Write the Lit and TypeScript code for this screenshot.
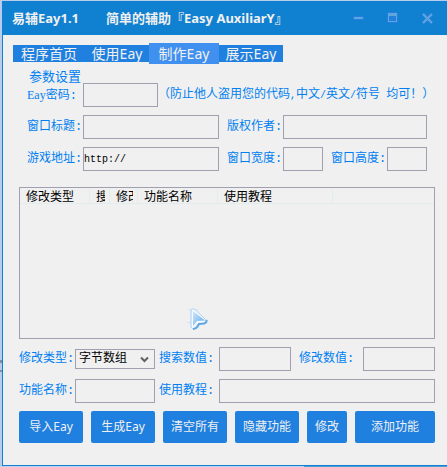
import { LitElement, html, css } from "lit";
import { customElement, state } from "lit/decorators.js";
import { classMap } from "lit/directives/class-map.js";

const TABS = ["程序首页", "使用Eay", "制作Eay", "展示Eay"];
const COLUMNS = [
  { name: "修改类型", cls: "c-type" },
  { name: "搜索数值", cls: "c-search" },
  { name: "修改数值", cls: "c-value" },
  { name: "功能名称", cls: "c-name" },
  { name: "使用教程", cls: "c-guide" },
  { name: "", cls: "c-rest" },
];

@customElement("app-root")
export class AppRoot extends LitElement {
  @state() private active = 2;

  static styles = css`
    :host {
      display: block;
      min-height: 100vh;
      box-sizing: border-box;
      padding: 1px 0 1px 2px;
      background:
        linear-gradient(90deg, #c0d0f0 68%, #50a0d8 68%) bottom / 100% 1px no-repeat,
        linear-gradient(#8090a0, #8090a0) 0 360px / 2px 3px no-repeat,
        linear-gradient(#8090a0, #8090a0) 0 370px / 2px 2px no-repeat,
        #b8ccec;
      font: 12px/16px "Liberation Mono", "Noto Sans CJK SC", sans-serif;
      color: #0080f0;
      display: flex;
    }
    * { box-sizing: border-box; }
    .window {
      flex: 1;
      min-width: 0;
      background: #f0f0f0;
      border-left: 1px solid #1080d0;
      border-bottom: 1px solid #1080d0;
      position: relative;
    }
    header {
      height: 34px;
      background: #1080d0;
      color: #f0f0f0;
      display: flex;
      align-items: center;
      padding: 0 12px 0 9px;
    }
    h1 {
      margin: 0;
      flex: 1;
      display: flex;
      gap: 27px;
      font: bold 13px/20px "Noto Sans", "Noto Sans CJK SC", sans-serif;
      white-space: nowrap;
    }
    .controls { display: flex; gap: 19px; }
    .controls button {
      width: 16px;
      height: 16px;
      padding: 0;
      border: 0;
      background: none;
    }
    svg { display: block; }
    nav {
      display: flex;
      width: max-content;
      margin: 8px 0 0 10px;
      align-items: center;
      background: linear-gradient(#2080e0, #2080e0) center / 100% 17px no-repeat;
    }
    nav button {
      border: 0;
      padding: 0;
      background: none;
      color: #f0f0f0;
      height: 21px;
      width: 64px;
      font: 14px/20px "Noto Sans", "Noto Sans CJK SC", sans-serif;
      white-space: nowrap;
    }
    nav button.home { width: 72px; }
    nav button.on { background: #4090f0; width: 70px; }
    fieldset {
      border: 0;
      margin: 5px 20px 0 24px;
      padding: 0;
      min-width: 0;
      display: grid;
      grid-template-columns: minmax(0, 1fr);
      gap: 8px;
    }
    legend {
      padding: 0 0 0 2px;
      height: 14px;
      font: 13px/14px "Noto Sans CJK SC", sans-serif;
    }
    .pair {
      display: grid;
      grid-template-columns: minmax(0, 192fr) minmax(0, 200fr);
      gap: 8px;
    }
    .halves {
      display: grid;
      grid-template-columns: repeat(2, minmax(0, 1fr));
      gap: 8px;
    }
    .secret { display: flex; align-items: center; white-space: nowrap; }
    .secret .field { flex: 0 0 131px; }
    .field {
      display: grid;
      grid-template-columns: 56px minmax(0, 1fr);
      align-items: center;
      white-space: nowrap;
    }
    .latin { font-size: 10px; }
    .brand { font-family: "Liberation Serif", serif; }
    input, select {
      width: 100%;
      height: 24px;
      margin: 0;
      border: 1px solid #a0a0b0;
      border-radius: 0;
      background: transparent;
      padding: 0;
      outline: none;
      color: #000;
      font: 10px/16px "Liberation Mono", "Noto Sans CJK SC", sans-serif;
    }
    select {
      appearance: none;
      height: 20px;
      padding: 0 3px;
      font-size: 12px;
    }
    .drop { position: relative; }
    .drop svg { position: absolute; right: 6px; top: 7px; pointer-events: none; }
    .list {
      margin: 16px 12px 0 16px;
      height: 152px;
      border: 1px solid #a0a0b0;
    }
    table {
      width: 100%;
      table-layout: fixed;
      border-collapse: separate;
      border-spacing: 0;
      color: #000;
    }
    th {
      height: 16px;
      padding: 0 4px 0 6px;
      border-right: 1px solid #e2ecec;
      border-bottom: 1px solid #e2ecec;
      font: 12px/15px "Noto Sans CJK SC", sans-serif;
      text-align: left;
    }
    th:last-child { border-right: 0; }
    th span { display: block; overflow: hidden; white-space: nowrap; }
    .c-type { width: 70px; }
    .c-search { width: 20px; }
    .c-value { width: 28px; }
    .c-name { width: 80px; }
    .c-guide { width: 115px; }
    .editor {
      margin: 8px 12px 0 16px;
      display: grid;
      grid-template-columns: repeat(3, minmax(0, 1fr));
      gap: 8px 4px;
    }
    .editor .mid { grid-template-columns: 60px minmax(0, 1fr); padding-right: 4px; }
    .editor .end { grid-template-columns: 64px minmax(0, 1fr); }
    .editor .wide { grid-template-columns: 60px minmax(0, 1fr); grid-column: span 2; }
    .actions {
      margin: 8px 12px 0 16px;
      display: grid;
      grid-template-columns: 64fr 64fr 64fr 64fr 40fr 80fr;
      gap: 8px;
    }
    .actions button {
      height: 32px;
      padding: 0;
      border: 0;
      border-radius: 2px;
      background: #2080e0;
      color: #f0f0f0;
      font: 12px/20px "Noto Sans", "Noto Sans CJK SC", sans-serif;
      white-space: nowrap;
    }
    .pointer { position: absolute; left: 184px; top: 306px; pointer-events: none; }
  `;

  render() {
    return html`
      <div class="window" lang="zh-CN">
        <header>
          <h1><span>易辅Eay1.1</span><span>简单的辅助『Easy AuxiliarY』</span></h1>
          <div class="controls">
            <button aria-label="最小化"><svg width="16" height="16"><rect x="4.500" y="6.500" width="10" height="3" fill="#60a4e0" stroke="#2080dc"/></svg></button>
            <button aria-label="最大化"><svg width="16" height="16"><rect x="3" y="2" width="11" height="11" fill="#2080dc"/><path d="M4 3h9v9H4zM5 6v5h7V6z" fill="#60a4e0" fill-rule="evenodd"/></svg></button>
            <button aria-label="关闭"><svg width="16" height="16"><path d="M4 4l9 9M13 4l-9 9" stroke="#2080dc" stroke-width="4"/><path d="M4 4l9 9M13 4l-9 9" stroke="#60a4e0" stroke-width="2"/></svg></button>
          </div>
        </header>
        <nav>
          ${TABS.map((t, i) => html`<button
            class=${classMap({ on: i === this.active, home: i === 0 })}
            @click=${() => (this.active = i)}>${t}</button>`)}
        </nav>
        <fieldset>
          <legend>参数设置</legend>
          <div class="secret">
            <div class="field"><label for="pw"><span class="brand">Eay</span>密码:</label><input id="pw" type="password"></div>
            <span>（防止他人盗用您的代码<span class="latin">,</span>中文<span class="latin">/</span>英文<span class="latin">/</span>符号<span class="latin"> </span>均可！）</span>
          </div>
          <div class="pair">
            <div class="field"><label for="title">窗口标题:</label><input id="title"></div>
            <div class="field"><label for="author">版权作者:</label><input id="author"></div>
          </div>
          <div class="pair">
            <div class="field"><label for="url">游戏地址:</label><input id="url" value="http://"></div>
            <div class="halves">
              <div class="field"><label for="w">窗口宽度:</label><input id="w"></div>
              <div class="field"><label for="h">窗口高度:</label><input id="h"></div>
            </div>
          </div>
        </fieldset>
        <div class="list">
          <table>
            <thead><tr>${COLUMNS.map((c) => html`<th class=${c.cls}><span>${c.name}</span></th>`)}</tr></thead>
          </table>
        </div>
        <div class="editor">
          <div class="field">
            <label for="kind">修改类型:</label>
            <div class="drop">
              <select id="kind"><option>字节数组</option></select>
              <svg width="9" height="7"><path d="M1 1.500l3.500 3.500 3.500-3.500" fill="none" stroke="#606060" stroke-width="2"/></svg>
            </div>
          </div>
          <div class="field mid"><label for="find">搜索数值:</label><input id="find"></div>
          <div class="field end"><label for="val">修改数值:</label><input id="val"></div>
          <div class="field"><label for="name">功能名称:</label><input id="name"></div>
          <div class="field wide"><label for="guide">使用教程:</label><input id="guide"></div>
        </div>
        <div class="actions">
          <button>导入Eay</button><button>生成Eay</button><button>清空所有</button>
          <button>隐藏功能</button><button>修改</button><button>添加功能</button>
        </div>
        <svg class="pointer" width="24" height="24" viewBox="0 0 24 24">
          <defs><linearGradient id="g" x1="0" y1="0" x2="1" y2="1"><stop offset="0" stop-color="#d0e8fc"/><stop offset="1" stop-color="#60a8e8"/></linearGradient></defs>
          <path d="M1 2.500h10M0 15.500h21" stroke="#d8e4f4"/>
          <path d="M4 3v17q1 3 4 1l3-4 7-1q2-1 1-3L8 2.500q-2-2-4 .500z" fill="#f4faff" stroke="#a8d0f4"/>
          <path d="M6 4v15l4-5 8-.500z" fill="url(#g)"/>
          <path d="M6 22q4 0 6-5l5-.500q3-1 2.500-3.500" fill="none" stroke="#60a4e0" stroke-width="2"/>
        </svg>
      </div>
    `;
  }
}
